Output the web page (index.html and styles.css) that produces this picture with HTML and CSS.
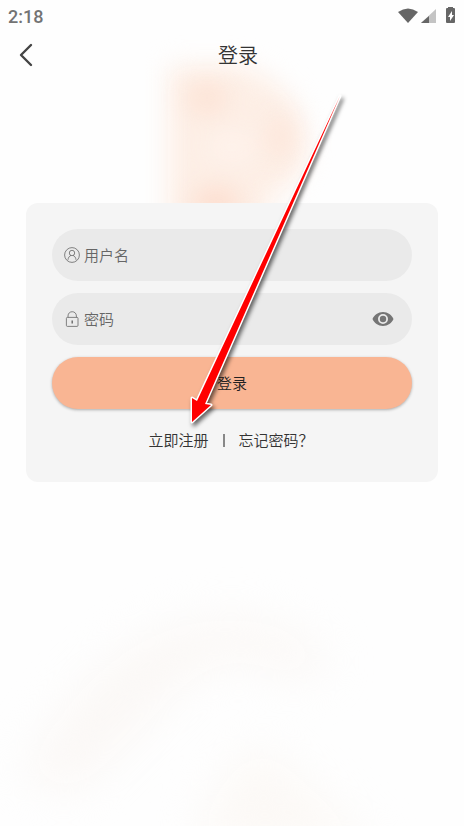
FILE: index.html
```html
<!DOCTYPE html>
<html lang="zh-CN">
  <head>
    <meta charset="UTF-8" />
    <meta name="viewport" content="width=device-width, initial-scale=1.0" />
    <title>登录</title>
    <link rel="stylesheet" href="styles.css" />
  </head>
  <body>
    <!-- soft colour patches behind the page -->
    <svg class="backdrop" viewBox="0 0 464 826" preserveAspectRatio="xMidYMin slice" aria-hidden="true">
      <defs>
        <filter id="soft" x="-50%" y="-50%" width="200%" height="200%" color-interpolation-filters="sRGB">
          <feGaussianBlur stdDeviation="13" />
        </filter>
        <filter id="haze" x="-50%" y="-50%" width="200%" height="200%" color-interpolation-filters="sRGB">
          <feGaussianBlur stdDeviation="22" />
        </filter>
      </defs>
      <path d="M168 66H240Q306 86 306 150Q300 186 268 198V250H168Z" fill="#fdefe6" filter="url(#soft)" />
      <g filter="url(#soft)">
        <ellipse cx="207" cy="98" rx="20" ry="16" fill="#fde2d4" />
        <ellipse cx="281" cy="137" rx="12" ry="24" fill="#fde5d9" />
        <ellipse cx="216" cy="204" rx="24" ry="16" fill="#fddccd" />
        <ellipse cx="232" cy="147" rx="24" ry="12" fill="#fff3ed" />
      </g>
      <g filter="url(#haze)">
        <path d="M20 780Q100 630 210 620Q300 610 330 670L290 680Q220 630 160 710L80 790Z" fill="#fbf8f6" />
        <path d="M200 826Q240 740 270 750Q320 800 380 850H200Z" fill="#fcf9f6" />
      </g>
    </svg>

    <div class="page">
      <div class="status-bar">
        <span class="time">2:18</span>
        <svg class="status-icons" width="60" height="20" viewBox="0 0 60 20" aria-hidden="true">
          <path d="M10 17L0 6Q10 -1 20 6Z" fill="#666" />
          <path d="M23 17L38 3V17Z" fill="#c4c4c4" />
          <path d="M23 17L31 10V17Z" fill="#666" />
          <path d="M50 2V1H55V2H56Q57 2 57 3V16Q57 17 56 17H49Q48 17 48 16V3Q48 2 49 2Z" fill="#666" />
          <path d="M54 5L50 11H52V15L56 9H54Z" fill="#fff" />
        </svg>
      </div>

      <header class="header">
        <button type="button" class="back" aria-label="返回">
          <svg width="16" height="24" viewBox="0 0 16 24">
            <path d="M13 2L3 12L13 22" fill="none" stroke="#444" stroke-width="2.4" stroke-linecap="round" stroke-linejoin="round" />
          </svg>
        </button>
        <h1 class="title">登录</h1>
      </header>

      <main class="card">
        <form class="form">
          <label class="field">
            <svg width="16" height="16" viewBox="0 0 16 16" fill="none" stroke="#666" stroke-width="0.8" aria-hidden="true">
              <circle cx="8" cy="8" r="7.4" />
              <circle cx="8" cy="6" r="2.7" />
              <path d="M4 12.800C4.200 10.600 5.200 9.200 7 8.400M9 8.400C10.800 9.200 11.800 10.600 12 12.800" />
            </svg>
            <input type="text" placeholder="用户名" aria-label="用户名" />
          </label>
          <div class="field">
            <svg width="16" height="16" viewBox="0 0 16 16" fill="none" stroke="#666" stroke-width="0.8" aria-hidden="true">
              <rect x="2.4" y="6.4" width="11.6" height="9" rx="1" />
              <path d="M4 6.4V5C4 -0.7 12.4 -0.7 12.4 5V6.4" />
              <path d="M8.2 9.6V12.4" stroke-width="1.4" />
            </svg>
            <input type="password" placeholder="密码" aria-label="密码" />
            <button type="button" class="eye" aria-label="显示密码">
              <svg width="22" height="16" viewBox="0 0 22 16">
                <path d="M11 1C6.200 1 2.200 4 0.500 8C2.200 12 6.200 15 11 15S19.800 12 21.500 8C19.800 4 15.800 1 11 1ZM11 13A5 5 0 1 1 11 3A5 5 0 0 1 11 13Z" fill="#757575" />
                <circle cx="11" cy="8" r="3.200" fill="#757575" />
              </svg>
            </button>
          </div>
          <button type="submit" class="submit">登录</button>
        </form>
        <nav class="links">
          <a href="#register">立即注册</a>
          <span class="divider"></span>
          <a href="#forgot">忘记密码？</a>
        </nav>
      </main>
    </div>

    <!-- arrow pointing at the register link -->
    <svg class="pointer" width="180" height="350" viewBox="180 85 180 350" aria-hidden="true">
      <path d="M340 96L205 404L211 405L192 422L192 398L197 401Z" fill="#f00" stroke="#fff" stroke-width="3" stroke-linejoin="round" paint-order="stroke" />
    </svg>
  </body>
</html>
```
FILE: styles.css
```css
* {
  box-sizing: border-box;
}
body {
  position: relative;
  min-height: 100vh;
  margin: 0;
  overflow-x: hidden;
  background: #fefefe;
  color: #333;
  font-family: "Noto Sans CJK SC", sans-serif;
  font-weight: 350;
}
button {
  padding: 0;
  border: 0;
  background: none;
  font-family: inherit;
  font-weight: inherit;
  cursor: pointer;
}
svg {
  display: block;
  flex: none;
}
.backdrop {
  position: absolute;
  top: 0;
  left: 0;
  z-index: -1;
  width: 100%;
  height: 100%;
}
.status-bar {
  display: flex;
  align-items: center;
  justify-content: space-between;
  height: 32px;
  padding: 0 6px 0 8px;
}
.time {
  color: #737373;
  font-family: Roboto, sans-serif;
  font-size: 18px;
  font-weight: 500;
}
.header {
  display: flex;
  align-items: center;
  height: 46px;
  padding-right: 40px;
}
.back {
  display: flex;
  align-items: center;
  justify-content: center;
  width: 52px;
  height: 46px;
}
.title {
  flex: 1;
  margin: 0;
  font-size: 20px;
  font-weight: inherit;
  line-height: 30px;
  text-align: center;
}
.card {
  margin: 125px 26px 0;
  padding: 26px 26px 30px;
  border-radius: 12px;
  background: #f5f5f5;
}
.form {
  display: flex;
  flex-direction: column;
  gap: 12px;
}
.field {
  display: flex;
  align-items: center;
  gap: 4px;
  height: 52px;
  padding: 0 18px 0 12px;
  border-radius: 26px;
  background: #eaeaea;
}
.field input {
  flex: 1;
  min-width: 0;
  padding: 0 0 2px;
  border: 0;
  outline: 0;
  background: none;
  color: #333;
  font-family: inherit;
  font-size: 15px;
  font-weight: inherit;
}
.field input::placeholder {
  color: #666;
}
.submit {
  height: 52px;
  padding-bottom: 2px;
  border-radius: 26px;
  background: #f9b593;
  box-shadow: 0 1px 3px rgba(0, 0, 0, 0.3);
  color: #222;
  font-size: 15px;
}
.links {
  display: flex;
  align-items: center;
  justify-content: center;
  gap: 14px;
  margin-top: 19px;
  padding-right: 2px;
  font-size: 15px;
  line-height: 24px;
}
.links a {
  color: #333;
  text-decoration: none;
}
.divider {
  width: 2px;
  height: 13px;
  background: #888;
}
.pointer {
  position: absolute;
  top: 85px;
  left: 180px;
  pointer-events: none;
  filter: drop-shadow(2px 3px 2px rgba(0, 0, 0, 0.6));
}
```
